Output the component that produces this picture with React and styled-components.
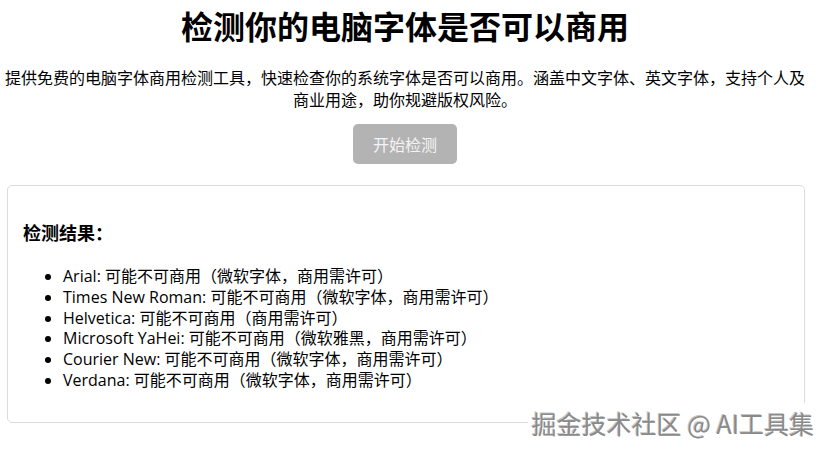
import React from "react"
import styled, { createGlobalStyle } from "styled-components"

const GlobalStyle = createGlobalStyle`
  body {
    margin: 0;
    background: #fff;
    color: #000;
    font-family: "Open Sans", "Noto Sans CJK SC", sans-serif;
  }
`

const Page = styled.div`
  position: relative;
  width: 832px;
  height: 452px;
  overflow: hidden;
`

const Content = styled.div`
  width: 800px;
  padding: 5px 0 0 5px;
  text-align: center;
`

const Title = styled.h1`
  margin: 0;
  font-size: 32px;
  line-height: 40px;
  font-weight: 700;
  font-family: "Noto Sans CJK SC", sans-serif;
`

const Intro = styled.p`
  margin: 21px 0 0;
  font-size: 16px;
  line-height: 22px;
  font-family: "Noto Sans CJK SC", sans-serif;
`

const CheckButton = styled.button`
  margin-top: 14px;
  height: 40px;
  padding: 0 20px;
  border: none;
  border-radius: 5px;
  background: #b3b3b3;
  color: #f4f4f4;
  font-size: 16px;
  font-family: "Noto Sans CJK SC", sans-serif;
  cursor: not-allowed;
`

const ResultCard = styled.div`
  margin: 21px 0 0 2px;
  width: 766px;
  padding: 0 15px 15px;
  border: 1px solid #dcdcdc;
  border-radius: 5px;
  text-align: left;
`

const ResultTitle = styled.h3`
  margin: 0;
  padding-top: 34px;
  font-size: 18px;
  line-height: 24px;
  font-weight: 700;
  font-family: "Noto Sans CJK SC", sans-serif;
`

const FontList = styled.ul`
  margin: 22px 0 16px;
  padding-left: 40px;
  font-size: 16px;
  line-height: 20.8px;
`

const Watermark = styled.div`
  position: absolute;
  right: 16px;
  top: 403px;
  padding: 4px 2px 12px 4px;
  background: #fff;
  font-size: 25px;
  line-height: 32px;
  color: #8a8a8a;
  font-family: "Noto Sans CJK SC", sans-serif;
  text-shadow: 1px 1px 0 #fff, -1px -1px 0 #c8c8c8;
`

const fonts = [
  ["Arial", "可能不可商用（微软字体，商用需许可）"],
  ["Times New Roman", "可能不可商用（微软字体，商用需许可）"],
  ["Helvetica", "可能不可商用（商用需许可）"],
  ["Microsoft YaHei", "可能不可商用（微软雅黑，商用需许可）"],
  ["Courier New", "可能不可商用（微软字体，商用需许可）"],
  ["Verdana", "可能不可商用（微软字体，商用需许可）"],
]

export default function App() {
  return (
    <Page>
      <GlobalStyle />
      <Content>
        <Title>检测你的电脑字体是否可以商用</Title>
        <Intro>
          提供免费的电脑字体商用检测工具，快速检查你的系统字体是否可以商用。涵盖中文字体、英文字体，支持个人及商业用途，助你规避版权风险。
        </Intro>
        <CheckButton disabled>开始检测</CheckButton>
        <ResultCard>
          <ResultTitle>检测结果：</ResultTitle>
          <FontList>
            {fonts.map(([name, note]) => (
              <li key={name}>
                {name}: {note}
              </li>
            ))}
          </FontList>
        </ResultCard>
      </Content>
      <Watermark>掘金技术社区 @ AI工具集</Watermark>
    </Page>
  )
}
